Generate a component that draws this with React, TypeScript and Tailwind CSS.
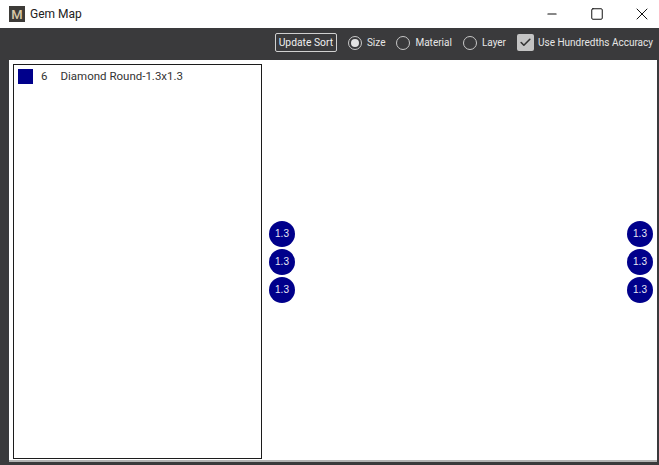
import { Check, Minus, Square, X } from 'lucide-react';

const font = { fontFamily: 'Roboto, sans-serif' };

function Radio({ label, checked }: { label: string; checked?: boolean }) {
  return (
    <div className="flex items-center gap-[5px]">
      <div className="flex h-[14px] w-[14px] items-center justify-center rounded-full border border-[#c8c8c8]">
        {checked && <div className="h-[8px] w-[8px] rounded-full bg-[#e4e4e4]" />}
      </div>
      <span className="text-[10px] text-[#e6e6e6]">{label}</span>
    </div>
  );
}

function Dots() {
  return (
    <div className="flex flex-col gap-[2px]">
      {[0, 1, 2].map((i) => (
        <div
          key={i}
          className="flex h-[26px] w-[26px] items-center justify-center rounded-full bg-[#00008b] text-[10px] text-[#e8e8f4]"
          style={{ fontFamily: '"Liberation Sans", sans-serif' }}
        >
          1.3
        </div>
      ))}
    </div>
  );
}

export default function App() {
  return (
    <div className="flex h-[465px] w-[659px] flex-col overflow-hidden bg-[#3a3a3c]" style={font}>
      <div className="flex h-[28px] shrink-0 items-center bg-white pl-[9px]">
        <div className="flex h-[16px] w-[16px] items-center justify-center bg-[#3d3b38] text-[13px] font-medium leading-none text-[#d8c9a8]">
          M
        </div>
        <span className="ml-[5px] text-[12px] text-[#222]">Gem Map</span>
        <div className="ml-auto mr-[-5px] flex items-center text-[#111]">
          <div className="flex w-[45px] justify-center">
            <Minus size={14} strokeWidth={2} />
          </div>
          <div className="flex w-[45px] justify-center">
            <Square size={14} strokeWidth={1.7} />
          </div>
          <div className="flex w-[45px] justify-center">
            <X size={20} strokeWidth={1.2} />
          </div>
        </div>
      </div>

      <div className="flex h-[32px] shrink-0 items-center justify-end gap-[11px] pb-[3px] pr-[6px]">
        <div className="flex h-[19px] w-[62px] items-center justify-center rounded-[2px] border border-[#d0d0d0] text-[10.3px] text-[#efefef]">
          Update Sort
        </div>
        <Radio label="Size" checked />
        <Radio label="Material" />
        <Radio label="Layer" />
        <div className="flex items-center gap-[4px]">
          <div className="flex h-[17px] w-[17px] items-center justify-center rounded-[2px] bg-[#c4c4c4]">
            <Check size={13} strokeWidth={3} className="text-[#333]" />
          </div>
          <span className="text-[10px] text-[#e6e6e6]">Use Hundredths Accuracy</span>
        </div>
      </div>

      <div className="ml-[9px] mr-[2px] flex h-[402px] shrink-0 items-stretch gap-[7px] border-b-2 border-[#b4b4b4] bg-white pb-[1px] pl-[4px] pr-[4px] pt-[4px]">
        <div className="w-[249px] shrink-0 border border-[#1c1c1c] pl-[4px] pt-[3px]">
          <div className="flex items-center text-[11.5px] text-[#333]">
            <div className="h-[15px] w-[15px] bg-[#00008b]" />
            <span className="ml-[8px]">6</span>
            <span className="ml-[13px]">Diamond Round-1.3x1.3</span>
          </div>
        </div>
        <div className="flex flex-1 items-center justify-between">
          <Dots />
          <Dots />
        </div>
      </div>
    </div>
  );
}
